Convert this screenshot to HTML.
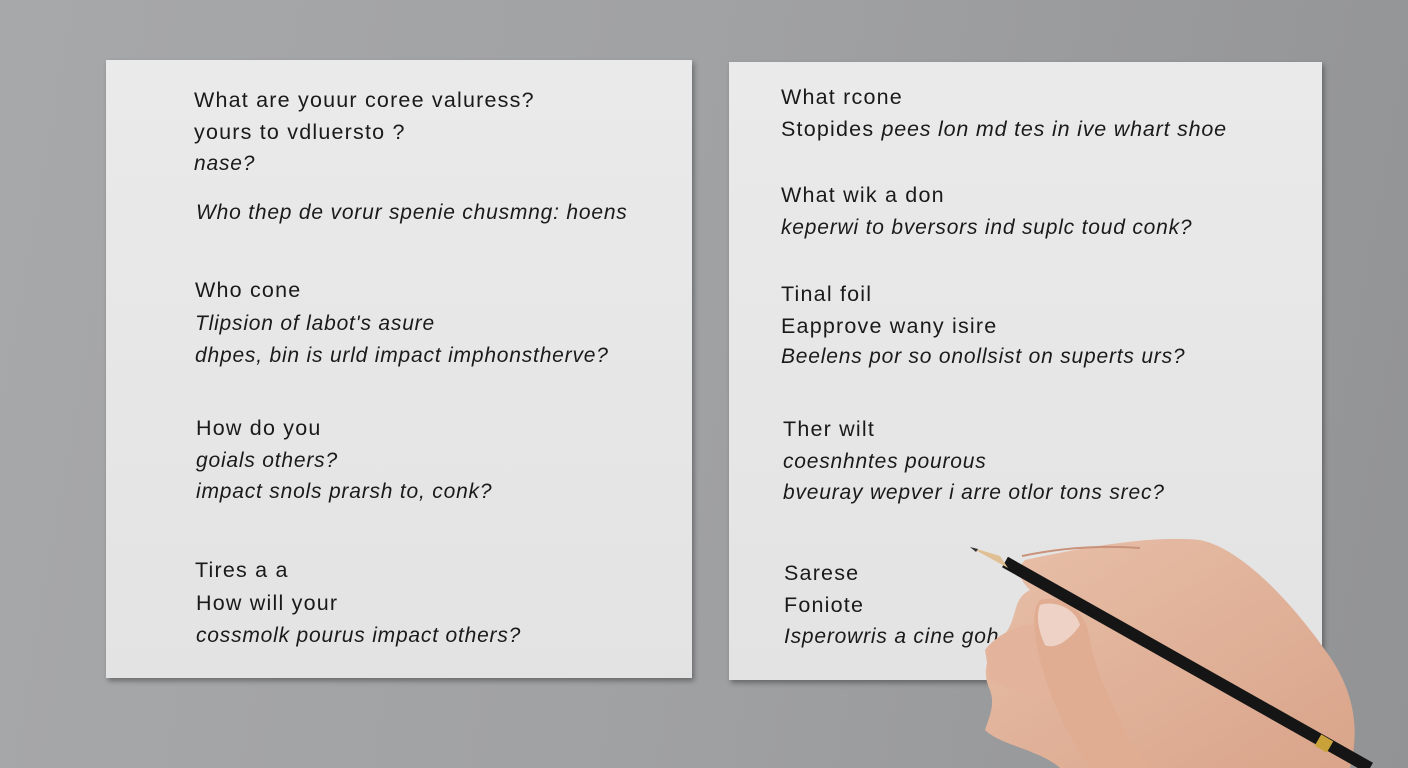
<!DOCTYPE html>
<html><head><meta charset="utf-8"><style>
html,body{margin:0;padding:0}
body{width:1408px;height:768px;overflow:hidden;position:relative;background:linear-gradient(100deg,#a7a8aa 0%,#a0a1a3 50%,#929395 100%);font-family:"Liberation Sans",sans-serif}
.card{position:absolute;background:linear-gradient(180deg,#eaeaea,#e3e3e3);box-shadow:2px 3px 5px rgba(0,0,0,.35)}
.t{position:absolute;font-size:21.5px;color:#1a1a1a;white-space:nowrap;line-height:24px;letter-spacing:1.2px}
.i{font-style:italic;font-size:21px;letter-spacing:.8px}
</style></head><body>
<div class="card" style="left:106px;top:60px;width:586px;height:618px"></div>
<div class="card" style="left:729px;top:62px;width:593px;height:618px"></div>

<div class="t" style="left:194px;top:88px">What are youur coree valuress?</div>
<div class="t" style="left:194px;top:120px">yours to vdluersto ?</div>
<div class="t i" style="left:194px;top:152px">nase?</div>
<div class="t i" style="left:196px;top:201px">Who thep de vorur spenie chusmng: hoens</div>
<div class="t" style="left:195px;top:278px">Who cone</div>
<div class="t i" style="left:195px;top:312px">Tlipsion of labot's asure</div>
<div class="t i" style="left:195px;top:344px">dhpes, bin is urld impact imphonstherve?</div>
<div class="t" style="left:196px;top:416px">How do you</div>
<div class="t i" style="left:196px;top:449px">goials others?</div>
<div class="t i" style="left:196px;top:480px">impact snols prarsh to, conk?</div>
<div class="t" style="left:195px;top:558px">Tires a a</div>
<div class="t" style="left:196px;top:591px">How will your</div>
<div class="t i" style="left:196px;top:624px">cossmolk pourus impact others?</div>

<div class="t" style="left:781px;top:85px">What rcone</div>
<div class="t" style="left:781px;top:117px">Stopides <i style="letter-spacing:.8px">pees lon md tes in ive whart shoe</i></div>
<div class="t" style="left:781px;top:183px">What wik a don</div>
<div class="t i" style="left:781px;top:216px">keperwi to bversors ind suplc toud conk?</div>
<div class="t" style="left:781px;top:282px">Tinal foil</div>
<div class="t" style="left:781px;top:314px">Eapprove wany isire</div>
<div class="t i" style="left:781px;top:345px">Beelens por so onollsist on superts urs?</div>
<div class="t" style="left:783px;top:417px">Ther wilt</div>
<div class="t i" style="left:783px;top:450px">coesnhntes pourous</div>
<div class="t i" style="left:783px;top:481px">bveuray wepver i arre otlor tons srec?</div>
<div class="t" style="left:784px;top:561px">Sarese</div>
<div class="t" style="left:784px;top:593px">Foniote</div>
<div class="t i" style="left:784px;top:625px">Isperowris a cine goh</div>

<svg style="position:absolute;left:0;top:0" width="1408" height="768">
<defs><linearGradient id="sk" x1="0" y1="0" x2="1" y2="1"><stop offset="0" stop-color="#e8bfa8"/><stop offset="1" stop-color="#d9a48a"/></linearGradient></defs>
<path d="M1025,560 C1080,548 1150,535 1200,540 C1240,548 1290,600 1325,650 C1355,690 1360,730 1350,768 L1060,768 C1040,750 1000,745 985,730 C990,715 995,705 990,690 C980,670 990,650 1000,640 C1020,620 1010,600 1030,590 C1020,580 1015,570 1025,560 Z" fill="url(#sk)"/>
<path d="M985,650 C1000,630 1030,620 1050,625 L1070,700 C1040,700 1010,690 990,680 Z" fill="#e3b39b"/>
<path d="M1040,600 C1060,595 1085,605 1090,640 C1095,670 1110,700 1130,740 L1150,768 L1090,768 C1070,740 1050,700 1040,660 C1035,640 1030,610 1040,600 Z" fill="#e0ad93"/>
<path d="M1040,605 C1055,600 1075,608 1080,625 C1070,640 1055,650 1045,645 C1038,630 1036,615 1040,605 Z" fill="#efd2c6"/>
<path d="M1022,556 C1060,548 1100,545 1140,548" stroke="#c9927a" stroke-width="2" fill="none"/>
<line x1="1005" y1="562" x2="1370" y2="768" stroke="#151515" stroke-width="12" stroke-linecap="butt"/>
<line x1="1318" y1="740" x2="1330" y2="747" stroke="#c9a23a" stroke-width="13"/>
<polygon points="970,547 1000,556 1008,568" fill="#e0bf94"/>
<polygon points="970,547 978,549 976,552" fill="#333"/>
</svg>
</body></html>
